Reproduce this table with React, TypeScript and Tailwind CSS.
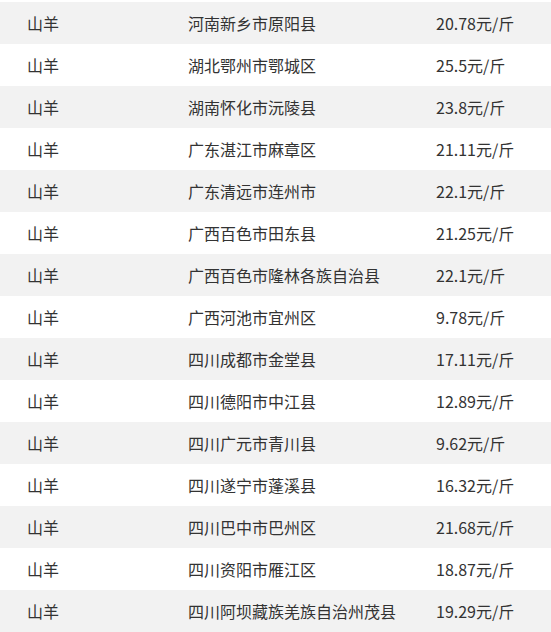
import React from "react";

const rows: [string, string, string][] = [
  ["山羊", "河南新乡市原阳县", "20.78元/斤"],
  ["山羊", "湖北鄂州市鄂城区", "25.5元/斤"],
  ["山羊", "湖南怀化市沅陵县", "23.8元/斤"],
  ["山羊", "广东湛江市麻章区", "21.11元/斤"],
  ["山羊", "广东清远市连州市", "22.1元/斤"],
  ["山羊", "广西百色市田东县", "21.25元/斤"],
  ["山羊", "广西百色市隆林各族自治县", "22.1元/斤"],
  ["山羊", "广西河池市宜州区", "9.78元/斤"],
  ["山羊", "四川成都市金堂县", "17.11元/斤"],
  ["山羊", "四川德阳市中江县", "12.89元/斤"],
  ["山羊", "四川广元市青川县", "9.62元/斤"],
  ["山羊", "四川遂宁市蓬溪县", "16.32元/斤"],
  ["山羊", "四川巴中市巴州区", "21.68元/斤"],
  ["山羊", "四川资阳市雁江区", "18.87元/斤"],
  ["山羊", "四川阿坝藏族羌族自治州茂县", "19.29元/斤"],
];

export default function App() {
  return (
    <div
      className="w-[551px] h-[632px] bg-white pt-[2px] text-[16px] text-[#333333] overflow-hidden"
      style={{ fontFamily: '"Noto Sans CJK SC", "Noto Sans", sans-serif' }}
    >
      {rows.map((r, i) => (
        <div
          key={i}
          className={`grid grid-cols-[188px_248px_1fr] h-[42px] items-center ${
            i % 2 === 0 ? "bg-[#f2f2f2]" : "bg-white"
          }`}
        >
          <div className="pl-[27px] whitespace-nowrap">{r[0]}</div>
          <div className="whitespace-nowrap">{r[1]}</div>
          <div className="whitespace-nowrap">{r[2]}</div>
        </div>
      ))}
    </div>
  );
}
